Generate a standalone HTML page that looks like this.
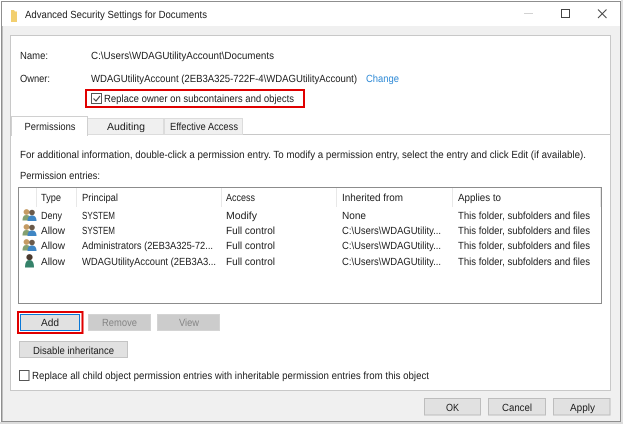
<!DOCTYPE html>
<html><head><meta charset="utf-8"><style>
html,body{margin:0;padding:0;background:#fff;width:623px;height:424px;overflow:hidden}
svg{display:block;filter:blur(0.35px)}
text{font-family:"Liberation Sans",sans-serif;font-size:10.4px;fill:#1c1c1c;text-rendering:geometricPrecision}
.d{fill:#858585}
</style></head><body>
<svg width="623" height="424" viewBox="0 0 623 424" xmlns="http://www.w3.org/2000/svg" shape-rendering="crispEdges">
<defs>
<g id="grp" shape-rendering="auto">
<circle cx="4" cy="3" r="2.900" fill="#c49a62"/><path d="M0 11.500c0-4 1.500-5.500 4-5.500s4 1.500 4 5.500z" fill="#84a070"/>
<circle cx="9.500" cy="3.500" r="2.800" fill="#6a5a4a"/><path d="M5 12c0-4 1.800-5.500 4.500-5.500s4.500 1.500 4.500 5.500z" fill="#3f86c4"/>
</g>
<g id="usr" shape-rendering="auto">
<circle cx="5" cy="3.200" r="3.100" fill="#4a3a2e"/><path d="M.5 13.500c0-5.500 1.800-7.500 4.500-7.500s4.500 2 4.500 7.500z" fill="#35826a"/>
</g>
</defs>
<rect x="0" y="0" width="623" height="424" fill="#fff"/>
<rect x="1.500" y="1.500" width="619" height="420" fill="#f0f0f0" stroke="#8f8f8f" stroke-width="1.500"/>
<rect x="2" y="2" width="618" height="24" fill="#fff"/>
<rect x="621" y="0" width="2" height="424" fill="#e4e4e4"/>
<rect x="0" y="422" width="623" height="2" fill="#dcdcdc"/>
<path d="M11 10h3l1 1.500h2V22h-6z" fill="#f2cf6f" shape-rendering="auto"/>
<text x="25" y="18" textLength="182" lengthAdjust="spacingAndGlyphs">Advanced Security Settings for Documents</text>
<rect x="524" y="13" width="9" height="1.200" fill="#d2d2d2"/>
<rect x="561.500" y="9.500" width="8" height="8" fill="none" stroke="#444" stroke-width="1"/>
<path d="M598 9.500l8.500 8.500M606.500 9.500L598 18" stroke="#444" stroke-width="1" fill="none" shape-rendering="auto"/>
<rect x="10.500" y="35.500" width="600" height="355" fill="#fff" stroke="#c8c8c8"/>
<text x="20" y="59" textLength="28" lengthAdjust="spacingAndGlyphs">Name:</text>
<text x="91" y="59" textLength="183" lengthAdjust="spacingAndGlyphs">C:\Users\WDAGUtilityAccount\Documents</text>
<text x="20" y="82" textLength="30" lengthAdjust="spacingAndGlyphs">Owner:</text>
<text x="91" y="82" textLength="266" lengthAdjust="spacingAndGlyphs">WDAGUtilityAccount (2EB3A325-722F-4\WDAGUtilityAccount)</text>
<text x="366" y="82" textLength="33" lengthAdjust="spacingAndGlyphs" style="fill:#2f8ad6">Change</text>
<rect x="86" y="90" width="218" height="17" fill="none" stroke="#e00000" stroke-width="2"/>
<rect x="91.500" y="93.500" width="10" height="10" fill="#fff" stroke="#555"/>
<path d="M93.500 98.500l2.500 2.500 4-5" fill="none" stroke="#444" stroke-width="1.100" shape-rendering="auto"/>
<text x="104" y="102" textLength="190" lengthAdjust="spacingAndGlyphs">Replace owner on subcontainers and objects</text>
<rect x="10" y="134" width="601" height="1" fill="#c8c8c8"/>
<rect x="87.500" y="118.500" width="76" height="16" fill="#f0f0f0" stroke="#dcdcdc"/>
<rect x="164.500" y="118.500" width="78" height="16" fill="#f0f0f0" stroke="#dcdcdc"/>
<rect x="11.500" y="116.500" width="76" height="19" fill="#fff" stroke="#d0d0d0"/>
<rect x="12" y="134" width="75" height="2" fill="#fff"/>
<text x="24.500" y="130" textLength="51" lengthAdjust="spacingAndGlyphs">Permissions</text>
<text x="107" y="130" textLength="38" lengthAdjust="spacingAndGlyphs">Auditing</text>
<text x="170" y="130" textLength="68" lengthAdjust="spacingAndGlyphs">Effective Access</text>
<text x="20" y="158" textLength="566" lengthAdjust="spacingAndGlyphs">For additional information, double-click a permission entry. To modify a permission entry, select the entry and click Edit (if available).</text>
<text x="20" y="179" textLength="80" lengthAdjust="spacingAndGlyphs">Permission entries:</text>
<rect x="18.500" y="187.500" width="583" height="116" fill="#fff" stroke="#8c8c8c"/>
<g fill="#e8e8e8"><rect x="36" y="188" width="1" height="19"/><rect x="76" y="188" width="1" height="19"/><rect x="221" y="188" width="1" height="19"/><rect x="336" y="188" width="1" height="19"/><rect x="452" y="188" width="1" height="19"/><rect x="600" y="188" width="1" height="19"/></g>
<text x="41" y="201" textLength="20" lengthAdjust="spacingAndGlyphs">Type</text>
<text x="82" y="201" textLength="36" lengthAdjust="spacingAndGlyphs">Principal</text>
<text x="226" y="201" textLength="29" lengthAdjust="spacingAndGlyphs">Access</text>
<text x="342" y="201" textLength="61" lengthAdjust="spacingAndGlyphs">Inherited from</text>
<text x="458" y="201" textLength="43" lengthAdjust="spacingAndGlyphs">Applies to</text>
<use href="#grp" x="22.500" y="209"/><use href="#grp" x="22.500" y="224"/><use href="#grp" x="22.500" y="239"/><use href="#usr" x="24.500" y="254"/>
<text x="41" y="219" textLength="21" lengthAdjust="spacingAndGlyphs">Deny</text>
<text x="82" y="219" textLength="33" lengthAdjust="spacingAndGlyphs">SYSTEM</text>
<text x="226" y="219" textLength="31" lengthAdjust="spacingAndGlyphs">Modify</text>
<text x="342" y="219" textLength="24" lengthAdjust="spacingAndGlyphs">None</text>
<text x="458" y="219" textLength="132" lengthAdjust="spacingAndGlyphs">This folder, subfolders and files</text>
<text x="41" y="234" textLength="24" lengthAdjust="spacingAndGlyphs">Allow</text>
<text x="82" y="234" textLength="33" lengthAdjust="spacingAndGlyphs">SYSTEM</text>
<text x="226" y="234" textLength="49" lengthAdjust="spacingAndGlyphs">Full control</text>
<text x="342" y="234" textLength="99" lengthAdjust="spacingAndGlyphs">C:\Users\WDAGUtility...</text>
<text x="458" y="234" textLength="132" lengthAdjust="spacingAndGlyphs">This folder, subfolders and files</text>
<text x="41" y="249" textLength="24" lengthAdjust="spacingAndGlyphs">Allow</text>
<text x="82" y="249" textLength="131" lengthAdjust="spacingAndGlyphs">Administrators (2EB3A325-72...</text>
<text x="226" y="249" textLength="49" lengthAdjust="spacingAndGlyphs">Full control</text>
<text x="342" y="249" textLength="99" lengthAdjust="spacingAndGlyphs">C:\Users\WDAGUtility...</text>
<text x="458" y="249" textLength="132" lengthAdjust="spacingAndGlyphs">This folder, subfolders and files</text>
<text x="41" y="265" textLength="24" lengthAdjust="spacingAndGlyphs">Allow</text>
<text x="82" y="265" textLength="134" lengthAdjust="spacingAndGlyphs">WDAGUtilityAccount (2EB3A3...</text>
<text x="226" y="265" textLength="49" lengthAdjust="spacingAndGlyphs">Full control</text>
<text x="342" y="265" textLength="99" lengthAdjust="spacingAndGlyphs">C:\Users\WDAGUtility...</text>
<text x="458" y="265" textLength="132" lengthAdjust="spacingAndGlyphs">This folder, subfolders and files</text>
<rect x="18" y="312" width="64.500" height="21" fill="none" stroke="#e00000" stroke-width="2"/>
<rect x="20.500" y="314.500" width="59" height="16" fill="#e1e1e1" stroke="#0a78d7" stroke-width="1.200"/>
<text x="41" y="326" textLength="18" lengthAdjust="spacingAndGlyphs">Add</text>
<rect x="88.500" y="314.500" width="62" height="16" fill="#cccccc" stroke="#d4d4d4"/>
<text class="d" x="102" y="326" textLength="35" lengthAdjust="spacingAndGlyphs">Remove</text>
<rect x="157.500" y="314.500" width="62" height="16" fill="#cccccc" stroke="#d4d4d4"/>
<text class="d" x="179" y="326" textLength="20" lengthAdjust="spacingAndGlyphs">View</text>
<rect x="19.500" y="341.500" width="108" height="16" fill="#e1e1e1" stroke="#c4c4c4"/>
<text x="33" y="354" textLength="81" lengthAdjust="spacingAndGlyphs">Disable inheritance</text>
<rect x="19.500" y="370.500" width="9.500" height="10" fill="#fff" stroke="#555"/>
<text x="32" y="379" textLength="397" lengthAdjust="spacingAndGlyphs">Replace all child object permission entries with inheritable permission entries from this object</text>
<rect x="424.500" y="398.500" width="56" height="16.500" fill="#e1e1e1" stroke="#bdbdbd"/>
<text x="446" y="411" textLength="13" lengthAdjust="spacingAndGlyphs">OK</text>
<rect x="488.500" y="398.500" width="57" height="16.500" fill="#e1e1e1" stroke="#bdbdbd"/>
<text x="502" y="411" textLength="30" lengthAdjust="spacingAndGlyphs">Cancel</text>
<rect x="553.500" y="398.500" width="56.500" height="16.500" fill="#e1e1e1" stroke="#bdbdbd"/>
<text x="570" y="411" textLength="25" lengthAdjust="spacingAndGlyphs">Apply</text>
</svg>
</body></html>
